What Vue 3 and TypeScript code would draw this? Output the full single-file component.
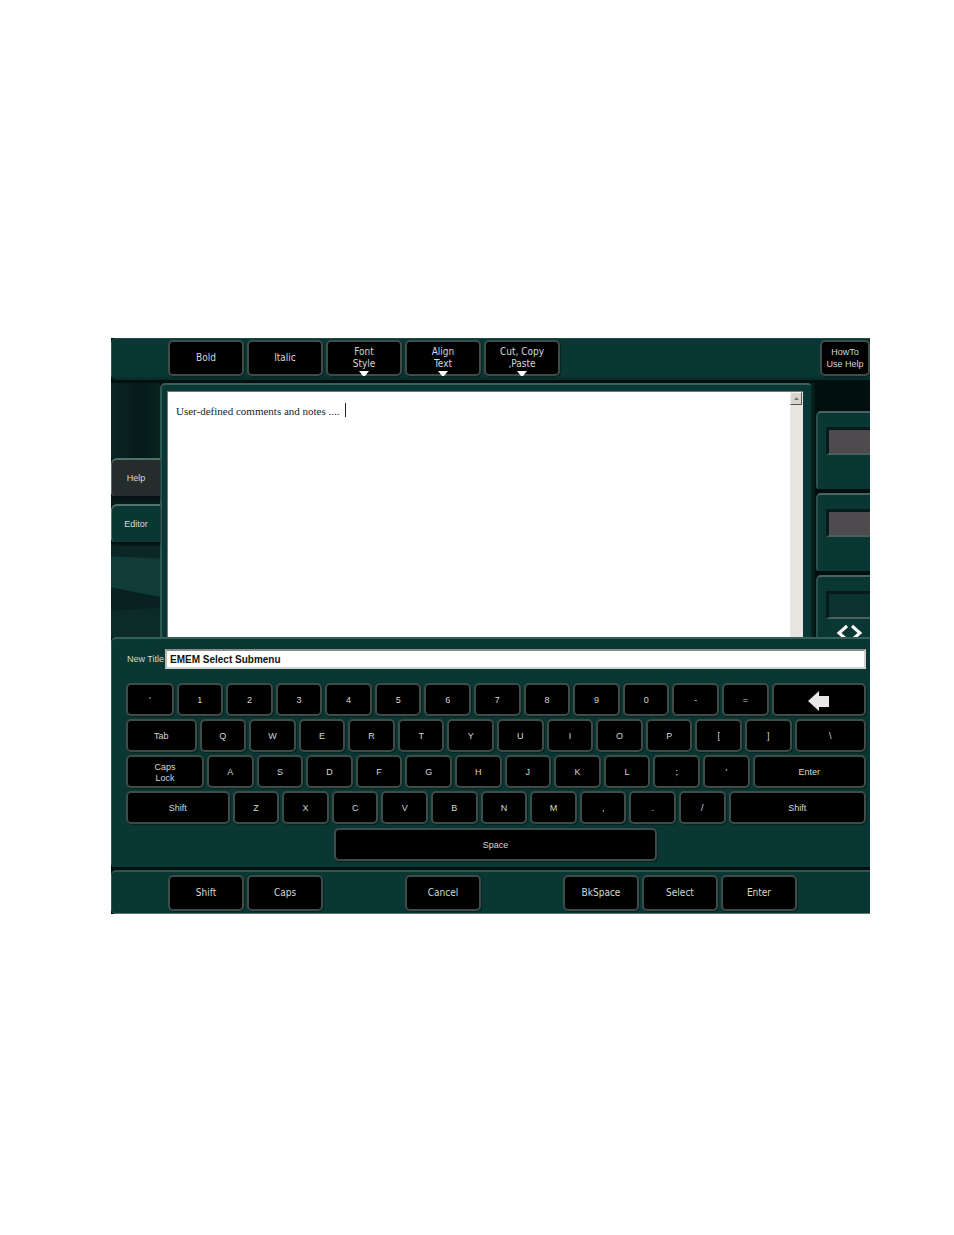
<script setup lang="ts">
import { ref } from 'vue'

interface SoftKey {
  label: string
  menu?: boolean
}
interface Key {
  label: string
  grow: number
  icon?: boolean
}

const note = ref('User-defined comments and notes ....')
const title = ref('EMEM Select Submenu')

const tools: SoftKey[] = [
  { label: 'Bold' },
  { label: 'Italic' },
  { label: 'Font\nStyle', menu: true },
  { label: 'Align\nText', menu: true },
  { label: 'Cut, Copy\n,Paste', menu: true },
]

const actions: (string | null)[] = ['Shift', 'Caps', null, 'Cancel', null, 'BkSpace', 'Select', 'Enter']

const plain = (chars: string): Key[] => [...chars].map((label) => ({ label, grow: 426 }))

const rows: Key[][] = [
  [{ label: "'", grow: 435 }, ...plain('1234567890-='), { label: 'Backspace', grow: 903, icon: true }],
  [{ label: 'Tab', grow: 665 }, ...plain('QWERTYUIOP[]'), { label: '\\', grow: 673 }],
  [{ label: 'Caps\nLock', grow: 740 }, ...plain("ASDFGHJKL;'"), { label: 'Enter', grow: 1094 }],
  [{ label: 'Shift', grow: 997 }, ...plain('ZXCVBNM,./'), { label: 'Shift', grow: 1333 }],
]
</script>

<template>
  <main class="page">
    <div class="screen">
      <header class="bar">
        <div class="slots">
          <button v-for="tool in tools" :key="tool.label" type="button" class="btn soft">
            {{ tool.label }}
            <svg v-if="tool.menu" class="caret" viewBox="0 0 10 6" aria-hidden="true"><path d="M0 0h10L6 5H4z" /></svg>
          </button>
        </div>
        <button type="button" class="btn howto">{{ 'HowTo\nUse Help' }}</button>
      </header>

      <section class="work">
        <nav class="side">
          <svg class="backdrop" viewBox="0 0 50 252" preserveAspectRatio="none" aria-hidden="true">
            <defs>
              <linearGradient id="shade" x1="0" x2="1" y1="0" y2="0">
                <stop offset="0" stop-color="#0a2625" />
                <stop offset="0.6" stop-color="#061a19" />
                <stop offset="1" stop-color="#08241f" />
              </linearGradient>
            </defs>
            <path d="M0 0h50v75H0z" fill="url(#shade)" />
            <path d="M0 155h50v97H0z" fill="#0a2625" />
            <path d="M0 172l50 2v38L0 203z" fill="#103b36" />
            <path d="M0 203l50 10v10L0 226z" fill="#082020" />
            <path d="M0 226l50-3v29H0z" fill="#0b2a28" />
          </svg>
          <button type="button" class="tab">Help</button>
          <button type="button" class="tab current">Editor</button>
        </nav>
        <div class="editor">
          <div class="sheet">
            <textarea v-model="note" class="note" aria-label="Comments" spellcheck="false"></textarea>
            <span class="cursor"></span>
            <div class="scroll">
              <button type="button" class="up" aria-label="Scroll up">
                <svg viewBox="0 0 5 3" aria-hidden="true"><path d="M2.5 0L5 3H0z" /></svg>
              </button>
            </div>
          </div>
        </div>
        <aside class="cards">
          <div class="card"><div class="well grey"></div></div>
          <div class="card"><div class="well grey"></div></div>
          <div class="card">
            <div class="well"></div>
            <svg class="arrows" viewBox="0 0 26 14" aria-hidden="true"><path d="M11 2L3 9l7 6M16 2l8 7-7 6" /></svg>
          </div>
        </aside>
      </section>

      <section class="keyboard">
        <div class="field">
          <label for="title">New Title</label>
          <input id="title" v-model="title" type="text" spellcheck="false" />
        </div>
        <div class="keys">
          <div v-for="(row, r) in rows" :key="r" class="row">
            <button
              v-for="(key, k) in row"
              :key="k"
              type="button"
              class="btn key"
              :style="{ flexGrow: key.grow }"
              :aria-label="key.icon ? key.label : undefined"
            >
              <svg v-if="key.icon" class="back" viewBox="0 0 21 20" aria-hidden="true"><path d="M0 10L11 0v5h10v11H11v4z" /></svg>
              <template v-else>{{ key.label }}</template>
            </button>
          </div>
          <div class="row last"><button type="button" class="btn key">Space</button></div>
        </div>
      </section>

      <footer class="bar bottom">
        <div class="slots">
          <template v-for="(action, i) in actions" :key="i">
            <button v-if="action" type="button" class="btn soft">{{ action }}</button>
            <span v-else></span>
          </template>
        </div>
      </footer>
    </div>
  </main>
</template>

<style>
body {
  margin: 0;
  background: #fff;
}
</style>

<style scoped>
* {
  box-sizing: border-box;
}
.page {
  padding: 338px 84px 0 111px;
  font-family: "Liberation Sans", Arial, sans-serif;
  font-size: 9px;
  color: #d4d8d6;
}
.screen {
  background: #020f0f;
  overflow: hidden;
}
button {
  margin: 0;
  padding: 0;
  font: inherit;
  color: inherit;
}
.btn {
  background: #000;
  border: 2px solid #3f4c49;
  border-radius: 5px;
  box-shadow: 1px 1px 1px #062421;
  white-space: pre-line;
  text-align: center;
}
.bar {
  display: flex;
  justify-content: space-between;
  height: 42px;
  padding: 1px 0 0 56px;
  background: #0a3733;
  border-top: 1px solid #1d4a45;
  border-left: 1px solid #2d5651;
  border-radius: 5px 0 0 5px;
  border-bottom: 3px solid #082d2a;
}
.slots {
  display: grid;
  grid-template-columns: repeat(8, 76px);
  column-gap: 3px;
}
.soft {
  position: relative;
  height: 36px;
  font-family: "DejaVu Sans Condensed", "DejaVu Sans", sans-serif;
  font-stretch: condensed;
  font-size: 10px;
  line-height: 12px;
}
.caret {
  position: absolute;
  left: 31px;
  bottom: -3px;
  width: 10px;
  height: 6px;
  fill: #fff;
}
.howto {
  width: 50px;
  height: 36px;
  line-height: 12px;
  white-space: pre;
}
.work {
  display: flex;
  height: 254px;
  margin-top: 3px;
}
.side {
  position: relative;
  width: 49px;
  padding-top: 75px;
  background: #051a19;
}
.backdrop {
  position: absolute;
  left: 0;
  top: 0;
  width: 100%;
  height: 100%;
}
.tab {
  position: relative;
  display: block;
  width: 100%;
  height: 38px;
  margin-bottom: 8px;
  background: #242d2c;
  border: 0 solid #53716b;
  border-top-width: 2px;
  border-left-width: 1px;
  border-radius: 6px 0 0 4px;
  box-shadow: 0 3px 2px #031210;
}
.current {
  background: #0a3733;
}
.editor {
  flex: 1;
  min-width: 0;
  padding: 6px 8px 0 5px;
  background: #0a3733;
  border-top: 2px solid #3b5f5a;
  border-left: 2px solid #315752;
  border-radius: 5px 3px 0 0;
}
.sheet {
  position: relative;
  display: flex;
  height: 100%;
  background: #fff;
  border-top: 1px solid #777;
  border-left: 1px solid #777;
}
.note {
  flex: 1;
  min-width: 0;
  padding: 12px 8px;
  border: 0;
  outline: 0;
  resize: none;
  background: #fff;
  color: #222;
  font-family: "Liberation Serif", "Times New Roman", serif;
  font-size: 11px;
  line-height: 14px;
}
.cursor {
  position: absolute;
  left: 177px;
  top: 11px;
  width: 1px;
  height: 14px;
  background: #222;
}
.scroll {
  width: 13px;
  background: #e9e5e0;
}
.up {
  display: flex;
  align-items: center;
  justify-content: center;
  width: 12px;
  height: 13px;
  background: #d8d5cf;
  border: 1px solid #f2f0ed;
  border-right-color: #555;
  border-bottom-color: #555;
}
.up svg {
  width: 5px;
  height: 3px;
  fill: #777;
}
.cards {
  width: 59px;
  padding: 28px 0 0 5px;
  background: linear-gradient(90deg, #082a27, #020f0f 5px);
}
.card {
  height: 78px;
  margin-bottom: 4px;
  padding: 14px 0 0 8px;
  background: #0a3733;
  border-top: 2px solid #48655f;
  border-left: 2px solid #2c504b;
  border-radius: 5px 0 0 3px;
}
.well {
  height: 28px;
  background: #0a3330;
  border-top: 3px solid #051b19;
  border-left: 3px solid #051b19;
  border-bottom: 2px solid #49605c;
  border-radius: 2px 0 0 0;
}
.grey {
  background: #4e4a4d;
}
.arrows {
  display: block;
  width: 26px;
  height: 14px;
  margin: 5px 0 0 10px;
  fill: none;
  stroke: #fff;
  stroke-width: 3;
}
.keyboard {
  position: relative;
  height: 230px;
  padding: 10px 4px 0 14px;
  background: #0a3733;
  border-top: 2px solid #34605a;
  border-left: 1px solid #2d5651;
  border-radius: 5px 0 0 4px;
}
.field {
  display: flex;
  align-items: center;
  height: 20px;
}
.field label {
  width: 39px;
  padding-left: 1px;
  white-space: nowrap;
}
.field input {
  flex: 1;
  min-width: 0;
  height: 20px;
  padding: 0 3px;
  border: 2px solid #8c8c8c;
  border-right-color: #d0d0d0;
  border-bottom-color: #d0d0d0;
  border-left-color: #bbb;
  background: #fff;
  color: #111;
  outline: 0;
  font-family: "Liberation Sans", Arial, sans-serif;
  font-size: 10px;
  font-weight: bold;
}
.keys {
  display: grid;
  row-gap: 3px;
  margin-top: 14px;
}
.row {
  display: flex;
  gap: 3px;
}
.key {
  flex: 1 1 0;
  min-width: 0;
  height: 33px;
  padding-top: 2px;
  line-height: 11px;
}
.back {
  display: block;
  width: 21px;
  height: 20px;
  margin: 0 auto;
  fill: #e8e8e8;
}
.last {
  margin-top: 1px;
  padding: 0 209px 0 208px;
}
.bottom {
  height: 44px;
  margin-top: 3px;
  padding-top: 3px;
  border-top: 2px solid #34544f;
  border-bottom: 1px solid #63716f;
}
</style>
